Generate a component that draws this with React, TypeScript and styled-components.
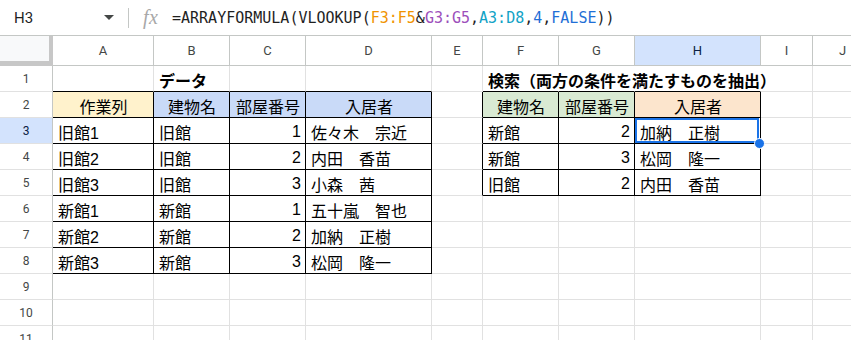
import * as React from 'react';
import styled, { createGlobalStyle } from 'styled-components';

const cellFont = '"Liberation Sans", "Noto Sans CJK JP", sans-serif';
const uiFont = 'Roboto, "Liberation Sans", sans-serif';
const monoFont = '"DejaVu Sans Mono", "Liberation Mono", monospace';

const black = '#000000';
const gridLine = '#e1e1e1';
const headerLine = '#c4c7c5';
const selectBlue = '#1a73e8';
const activeHeader = '#d3e3fd';

const columns = ['A', 'B', 'C', 'D', 'E', 'F', 'G', 'H', 'I', 'J'];
const colWidths = [101, 76, 76, 126, 51, 76, 76, 126, 52, 60];
const rowCount = 11;

type Align = 'left' | 'center' | 'right';

interface CellData {
	text: string;
	align?: Align;
	bg?: string;
	bold?: boolean;
}

const yellow = '#fff2cc';
const blue = '#c9daf8';
const green = '#d9ead3';
const orange = '#fce5cd';

const c = (text: string, align: Align = 'left', bg?: string): CellData => ({ text, align, bg });
const head = (text: string, bg: string): CellData => ({ text, align: 'center', bg });

// sheet contents, keyed "row:col"
const cells: Record<string, CellData> = {
	'1:1': { text: 'データ', bold: true },
	'1:5': { text: '検索（両方の条件を満たすものを抽出）', bold: true },
	'2:0': head('作業列', yellow),
	'2:1': head('建物名', blue),
	'2:2': head('部屋番号', blue),
	'2:3': head('入居者', blue),
	'2:5': head('建物名', green),
	'2:6': head('部屋番号', green),
	'2:7': head('入居者', orange)
};

const dataRows = [
	['旧館1', '旧館', '1', '佐々木　宗近'],
	['旧館2', '旧館', '2', '内田　香苗'],
	['旧館3', '旧館', '3', '小森　茜'],
	['新館1', '新館', '1', '五十嵐　智也'],
	['新館2', '新館', '2', '加納　正樹'],
	['新館3', '新館', '3', '松岡　隆一']
];

const searchRows = [
	['新館', '2', '加納　正樹'],
	['新館', '3', '松岡　隆一'],
	['旧館', '2', '内田　香苗']
];

dataRows.forEach((row, i) => {
	row.forEach((text, j) => {
		cells[`${i + 3}:${j}`] = c(text, j === 2 ? 'right' : 'left');
	});
});

searchRows.forEach((row, i) => {
	row.forEach((text, j) => {
		cells[`${i + 3}:${j + 5}`] = c(text, j === 1 ? 'right' : 'left');
	});
});

const inTable = (r: number, col: number) =>
	(r >= 2 && r <= 8 && col >= 0 && col <= 3) || (r >= 2 && r <= 5 && col >= 5 && col <= 7);

const rightBorder = (r: number, col: number) => {
	// title in F1 runs over into I1, so those lines are hidden
	if (r === 1 && col >= 5 && col <= 7) return 'transparent';
	if (inTable(r, col) || inTable(r, col + 1)) return black;
	return gridLine;
};

const bottomBorder = (r: number, col: number) => (inTable(r, col) || inTable(r + 1, col) ? black : gridLine);

const selected = { row: 3, col: 7 };

const formulaParts: { text: string; color: string }[] = [
	{ text: '=ARRAYFORMULA(VLOOKUP(', color: '#1f1f1f' },
	{ text: 'F3:F5', color: '#f09300' },
	{ text: '&', color: '#1f1f1f' },
	{ text: 'G3:G5', color: '#9c4fbb' },
	{ text: ',', color: '#1f1f1f' },
	{ text: 'A3:D8', color: '#11a2c6' },
	{ text: ',', color: '#1f1f1f' },
	{ text: '4', color: '#1f6fd6' },
	{ text: ',', color: '#1f1f1f' },
	{ text: 'FALSE', color: '#1f6fd6' },
	{ text: '))', color: '#1f1f1f' }
];

const App = () => {
	const rows = Array.from({ length: rowCount }, (_, i) => i + 1);

	return (
		<>
			<GlobalStyle />
			<Page>
				<FormulaBar>
					<NameBox>
						<span>H3</span>
						<Caret />
					</NameBox>
					<Divider />
					<FxIcon>fx</FxIcon>
					<Formula>
						{formulaParts.map((part, i) => (
							<FormulaToken key={i} $color={part.color}>
								{part.text}
							</FormulaToken>
						))}
					</Formula>
				</FormulaBar>
				<Sheet>
					<Corner />
					{columns.map((name, col) => (
						<ColHeader key={name} $active={col === selected.col}>
							{name}
						</ColHeader>
					))}
					{rows.map((r) => (
						<React.Fragment key={r}>
							<RowHeader $active={r === selected.row}>{r}</RowHeader>
							{columns.map((name, col) => {
								const data = cells[`${r}:${col}`];
								const isSelected = r === selected.row && col === selected.col;
								return (
									<Cell
										key={name}
										$bg={data?.bg}
										$align={data?.align ?? 'left'}
										$bold={data?.bold}
										$br={rightBorder(r, col)}
										$bb={bottomBorder(r, col)}
									>
										{data?.text}
										{isSelected && (
											<Selection>
												<Handle />
											</Selection>
										)}
									</Cell>
								);
							})}
						</React.Fragment>
					))}
				</Sheet>
			</Page>
		</>
	);
};

const GlobalStyle = createGlobalStyle`
	html, body {
		margin: 0;
		padding: 0;
		background: #ffffff;
	}
	body {
		overflow: hidden;
	}
`;

const Page = styled.div`
	width: 851px;
	height: 340px;
	overflow: hidden;
	background: #ffffff;
`;

const FormulaBar = styled.div`
	box-sizing: border-box;
	height: 36px;
	display: flex;
	align-items: center;
	border-bottom: 1px solid ${headerLine};
`;

const NameBox = styled.div`
	box-sizing: border-box;
	width: 128px;
	padding: 0 14px 0 14px;
	display: flex;
	align-items: center;
	justify-content: space-between;
	font: 400 15px ${uiFont};
	color: #1f1f1f;
`;

const Caret = styled.span`
	width: 0;
	height: 0;
	border-left: 5px solid transparent;
	border-right: 5px solid transparent;
	border-top: 5px solid #444746;
`;

const Divider = styled.div`
	width: 1px;
	height: 20px;
	background: ${headerLine};
`;

const FxIcon = styled.span`
	margin-left: 14px;
	width: 18px;
	font: italic 400 20px 'Liberation Serif', serif;
	letter-spacing: 0.5px;
	color: #a8a8a8;
	line-height: 1;
	margin-bottom: 2px;
`;

const Formula = styled.div`
	margin-left: 11px;
	font: 400 15px ${monoFont};
	white-space: pre;
`;

const FormulaToken = styled.span<{ $color: string }>`
	color: ${(p) => p.$color};
`;

const Sheet = styled.div`
	display: grid;
	grid-template-columns: 53px ${colWidths.map((w) => `${w}px`).join(' ')};
	grid-template-rows: 30px;
	grid-auto-rows: 26px;
`;

const Corner = styled.div`
	box-sizing: border-box;
	background: #f8f9fa;
	border-right: 4px solid #c7c7c7;
	border-bottom: 5px solid #c7c7c7;
`;

const ColHeader = styled.div<{ $active: boolean }>`
	box-sizing: border-box;
	display: flex;
	align-items: center;
	justify-content: center;
	background: ${(p) => (p.$active ? activeHeader : '#ffffff')};
	border-right: 1px solid ${headerLine};
	border-bottom: 1px solid ${headerLine};
	font: 400 13px ${uiFont};
	color: ${(p) => (p.$active ? '#0b1f44' : '#444746')};
`;

const RowHeader = styled.div<{ $active: boolean }>`
	box-sizing: border-box;
	display: flex;
	align-items: center;
	justify-content: center;
	padding-top: 1px;
	background: ${(p) => (p.$active ? activeHeader : '#ffffff')};
	border-right: 1px solid ${headerLine};
	border-bottom: 1px solid ${gridLine};
	font: 400 12px ${uiFont};
	color: ${(p) => (p.$active ? '#0b1f44' : '#444746')};
`;

const Cell = styled.div<{ $bg?: string; $align: Align; $bold?: boolean; $br: string; $bb: string }>`
	box-sizing: border-box;
	position: relative;
	display: flex;
	align-items: center;
	justify-content: ${(p) => (p.$align === 'right' ? 'flex-end' : p.$align === 'center' ? 'center' : 'flex-start')};
	padding: 2px 4px 0 5px;
	background: ${(p) => p.$bg ?? 'transparent'};
	border-right: 1px solid ${(p) => p.$br};
	border-bottom: 1px solid ${(p) => p.$bb};
	font: ${(p) => (p.$bold ? 700 : 400)} 16px ${cellFont};
	color: #000000;
	white-space: nowrap;
`;

const Selection = styled.div`
	position: absolute;
	top: 0;
	left: 0;
	right: 1px;
	bottom: 0;
	border: 2px solid ${selectBlue};
	pointer-events: none;
	z-index: 2;
`;

const Handle = styled.div`
	box-sizing: border-box;
	position: absolute;
	right: -8px;
	bottom: -8px;
	width: 11px;
	height: 11px;
	border-radius: 50%;
	background: ${selectBlue};
	border: 1px solid #ffffff;
`;

export default App;
